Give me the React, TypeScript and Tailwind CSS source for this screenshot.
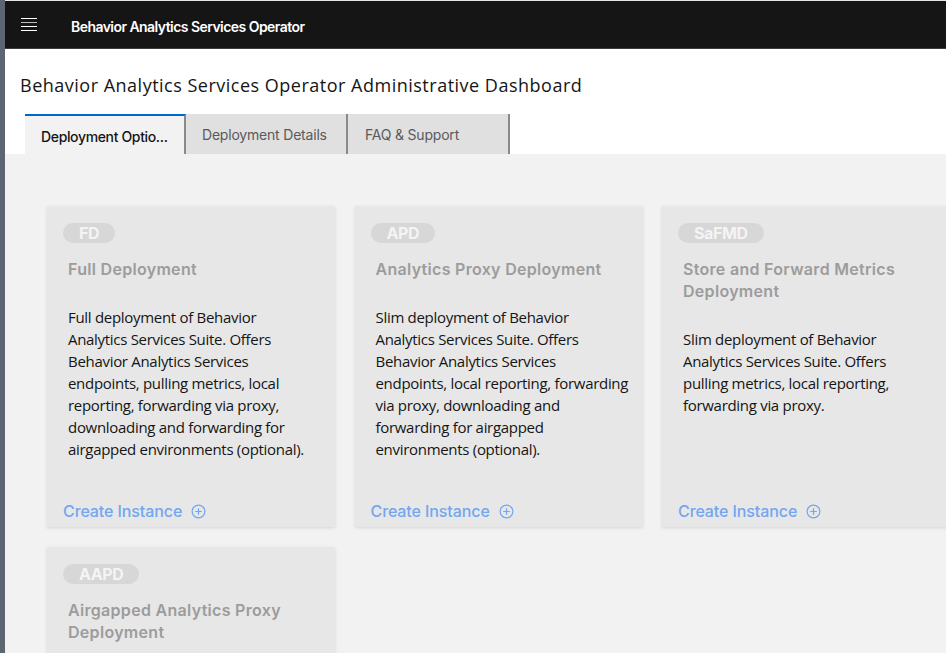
import React from "react";

const cards = [
  {
    badge: "FD",
    title: "Full Deployment",
    lines: [
      "Full deployment of Behavior",
      "Analytics Services Suite. Offers",
      "Behavior Analytics Services",
      "endpoints, pulling metrics, local",
      "reporting, forwarding via proxy,",
      "downloading and forwarding for",
      "airgapped environments (optional).",
    ],
  },
  {
    badge: "APD",
    title: "Analytics Proxy Deployment",
    lines: [
      "Slim deployment of Behavior",
      "Analytics Services Suite. Offers",
      "Behavior Analytics Services",
      "endpoints, local reporting, forwarding",
      "via proxy, downloading and",
      "forwarding for airgapped",
      "environments (optional).",
    ],
  },
  {
    badge: "SaFMD",
    title: "Store and Forward Metrics Deployment",
    lines: [
      "Slim deployment of Behavior",
      "Analytics Services Suite. Offers",
      "pulling metrics, local reporting,",
      "forwarding via proxy.",
    ],
  },
  {
    badge: "AAPD",
    title: "Airgapped Analytics Proxy Deployment",
    lines: [
      "Airgapped deployment of Behavior",
      "Analytics Services Suite. Offers",
      "local reporting and uploading of",
      "metrics.",
    ],
  },
];

function PlusCircle() {
  return (
    <svg width="15" height="15" viewBox="0 0 16 16" fill="none" stroke="#73a6f0" strokeWidth="1.3">
      <circle cx="8" cy="8" r="6.8" />
      <path d="M8 4.5v7M4.5 8h7" />
    </svg>
  );
}

function Card({ c }: { c: (typeof cards)[number] }) {
  return (
    <div className="h-[321px] bg-[#e7e7e7] shadow-[0_1px_3px_rgba(0,0,0,0.12)] flex flex-col px-4 pt-[17px] pb-[5px]">
      <div className="self-start h-[20px] px-[16px] rounded-full bg-[#d7d7d7] text-[#f4f4f4] font-bold text-[16px] leading-[20px] font-['Inter',sans-serif] tracking-tight">
        {c.badge}
      </div>
      <div className="mt-[15px] pl-[5px] pr-2 text-[16px] leading-[22px] font-semibold text-[#9c9c9c] font-['Inter',sans-serif] tracking-[0.3px]">
        {c.title}
      </div>
      <div className="mt-[26px] ml-[5px] text-[15px] leading-[22px] text-[#151515] font-['Open_Sans',sans-serif] tracking-[-0.3px] whitespace-nowrap">
        {c.lines.map((l, i) => (
          <div key={i}>{l}</div>
        ))}
      </div>
      <div className="mt-auto flex items-center gap-[9px] h-[22px] text-[#73a6f0] text-[16px] font-medium font-['Inter',sans-serif] tracking-[-0.1px]">
        <span>Create Instance</span>
        <PlusCircle />
      </div>
    </div>
  );
}

export default function App() {
  return (
    <div className="flex w-[946px] h-[653px] overflow-hidden bg-white">
      <div className="w-[5px] shrink-0 bg-[#5b6670]" />
      <div className="flex-1 flex flex-col min-w-0">
        <div className="h-[49px] shrink-0 border-t border-[#e6e6e6] border-b border-b-[#3c3c3c] bg-[#151515] flex items-center">
          <div className="ml-[16px] w-[16px] flex flex-col gap-[2.5px]">
            <div className="h-[1.5px] bg-white" />
            <div className="h-[1.5px] bg-[#bbbbbb]" />
            <div className="h-[1.5px] bg-white" />
            <div className="h-[1.5px] bg-white" />
          </div>
          <div className="ml-[34px] pt-[3px] text-white font-semibold text-[14px] tracking-[-0.55px] font-['Inter',sans-serif]">
            Behavior Analytics Services Operator
          </div>
        </div>
        <div className="shrink-0 pt-[24px] pl-[15px] text-[18px] leading-[25px] text-[#151515] font-['Open_Sans',sans-serif] tracking-[0.5px]">
          Behavior Analytics Services Operator Administrative Dashboard
        </div>
        <div className="shrink-0 mt-[16px] ml-[20px] flex h-[40px] text-[14px] font-['Inter',sans-serif]">
          <div className="w-[161px] bg-[#f2f2f2] border-t-2 border-[#0066cc] border-r-2 border-r-[#8a8a8a] flex items-center pl-[16px] pt-[2px] text-[#151515] font-medium tracking-[-0.35px]">
            Deployment Optio...
          </div>
          <div className="w-[162px] bg-[#e0e0e0] border-r-2 border-[#8a8a8a] flex items-center pl-[16px] text-[#5a5a5a] tracking-[-0.2px]">
            Deployment Details
          </div>
          <div className="w-[162px] bg-[#e0e0e0] border-r-2 border-[#8a8a8a] flex items-center pl-[17px] text-[#5a5a5a] tracking-[-0.2px]">
            FAQ &amp; Support
          </div>
        </div>
        <div className="flex-1 bg-[#f2f2f2] pt-[52px] pl-[42px]">
          <div className="grid grid-cols-[288px_288px_288px] gap-x-[19.5px] gap-y-[20px]">
            {cards.map((c) => (
              <Card key={c.badge} c={c} />
            ))}
          </div>
        </div>
      </div>
    </div>
  );
}
